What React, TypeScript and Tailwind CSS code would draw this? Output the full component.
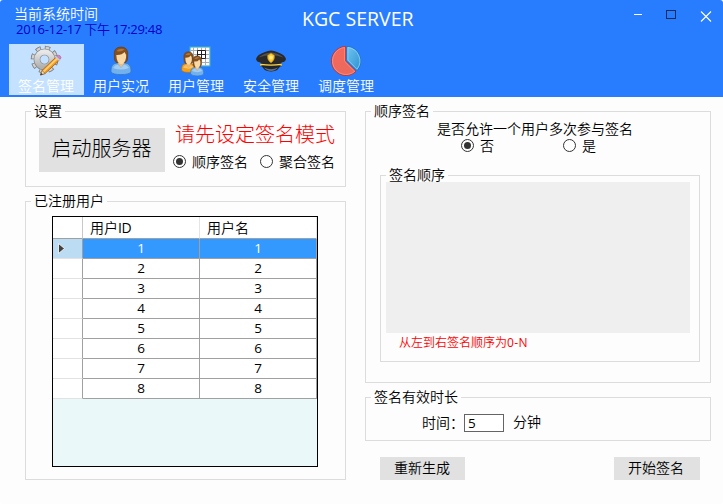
import type { ReactNode } from 'react';

function Gear() {
  return (
    <svg width="32" height="32" viewBox="0 0 32 32">
      <defs>
        <linearGradient id="gear" x1="0" y1="0" x2="0" y2="1">
          <stop offset="0" stopColor="#e8e8e8" />
          <stop offset="1" stopColor="#b0b0b0" />
        </linearGradient>
      </defs>
      <circle cx="14.500" cy="14.500" r="11.500" fill="none" stroke="#777" strokeWidth="4.600" strokeDasharray="5.1 3.932" />
      <circle cx="14.500" cy="14.500" r="11.300" fill="none" stroke="#d2d2d2" strokeWidth="3.400" strokeDasharray="3.7 5.175" strokeDashoffset="-0.700" />
      <circle cx="14.500" cy="14.500" r="7.500" fill="none" stroke="#858585" strokeWidth="6.600" />
      <circle cx="14.500" cy="14.500" r="7.500" fill="none" stroke="url(#gear)" strokeWidth="5.400" />
      <path d="M10.500 30 L12 25.500 L26 12 L29.200 15.200 L15.200 28.500 Z" fill="#f79a1c" stroke="#9b5a12" strokeWidth="0.700" />
      <path d="M12.900 26 L26.700 12.700 L27.900 13.900 L14 27.200 Z" fill="#ffd27a" />
      <path d="M10.500 30 L12 25.500 L15.200 28.500 Z" fill="#f4dcb8" stroke="#7c5a30" strokeWidth="0.600" />
      <path d="M10.300 30.300 L11.200 27.900 L12.800 29.300 Z" fill="#333" />
      <path d="M25.200 12.500 L26.700 11 L30 14.300 L28.500 15.700 Z" fill="#c9cdd4" />
      <path d="M26.500 11.100 Q28 9.400 30 10.700 Q32 12.700 30.200 14.300 Z" fill="#d97fc0" stroke="#a45b92" strokeWidth="0.500" />
    </svg>
  );
}

function Person({ shirt, edge }: { shirt: string; edge: string }) {
  return (
    <>
      <path d="M1 24 Q1 17.500 7 17 L15 17 Q21 17.500 21 24 L21 26 Q19 28.600 11 28.600 Q3 28.600 1 26 Z" fill={shirt} stroke={edge} strokeWidth="0.800" />
      <path d="M3 22 Q5 18.800 8 18.500 L11 22 L14 18.500 Q17 18.800 19 22 Q11 25 3 22 Z" fill="#fff" opacity="0.350" />
      <path d="M7.300 16.500 L11 21.500 L14.700 16.500 Z" fill="#edbd82" />
      <path d="M4.300 10 Q3.300 1 11 1 Q18.700 1 17.700 10 Q18 15 15.500 16.500 L6.500 16.500 Q4 15 4.300 10 Z" fill="#84501f" stroke="#63350c" strokeWidth="0.600" />
      <path d="M6.300 9 Q12 9.300 14.500 6 Q16.500 8 16 12 Q14.800 18 11 18 Q6.700 17.500 6.300 9 Z" fill="#f9d9a5" />
      <path d="M6.500 5 Q10 1.500 14.500 3.500 Q11 6.500 6.500 5 Z" fill="#b98045" opacity="0.800" />
    </>
  );
}

function User() {
  return (
    <svg width="22" height="30" viewBox="0 0 22 30">
      <Person shirt="#72b1ed" edge="#3478be" />
    </svg>
  );
}

function Users() {
  return (
    <svg width="32" height="32" viewBox="0 0 32 32">
      <rect x="10" y="2" width="20" height="19" fill="#fff" stroke="#3db0c5" strokeWidth="1.200" />
      <path d="M10.500 5.500h19M10.500 9.500h19M10.500 13.500h19M10.500 17.500h19M13.500 2.500v18M17.500 2.500v18M21.500 2.500v18M25.500 2.500v18" stroke="#a5aeb5" fill="none" />
      <path d="M17.500 5.500h8v8h-8zM21.500 5.500v8M17.500 9.500h8" stroke="#222" fill="none" />
      <g transform="translate(1 6) scale(.68 .75)">
        <Person shirt="#f3a01c" edge="#b66808" />
      </g>
      <g transform="translate(10 10) scale(.65 .73)">
        <Person shirt="#72b1ed" edge="#3478be" />
      </g>
    </svg>
  );
}

function Cap() {
  return (
    <svg width="32" height="24" viewBox="0 0 32 24">
      <path d="M6 15 Q8 22.500 16 22.500 Q24 22.500 26 15 Z" fill="#20242b" />
      <path d="M9 18.500 Q16 22 23 18.500 Q20 22 16 22 Q12 22 9 18.500 Z" fill="#69707a" />
      <path d="M1 10 Q2 5.500 10 3 Q16 0 22 3 Q30 5.500 31 10 Q30.500 13 26.500 13.500 L26.500 17.500 Q16 15.500 5.500 17.500 L5.500 13.500 Q1.500 13 1 10 Z" fill="#292929" />
      <path d="M3.500 8.500 Q9 4 16 3.500 Q23 4 28.500 8.500 Q22 6 16 6 Q10 6 3.500 8.500 Z" fill="#525252" />
      <path d="M5.800 16.800v-1.500Q16 16.800 26.200 15.300v1.500" stroke="#ffd84a" strokeWidth="1.200" fill="none" />
      <path d="M16 4 L19.600 6.500 Q20 11 16 14 Q12 11 12.400 6.500 Z" fill="#f7c72c" stroke="#a97506" strokeWidth="0.500" />
      <circle cx="16" cy="8.600" r="2" fill="#ffe88a" />
    </svg>
  );
}

function Pie() {
  return (
    <svg width="32" height="32" viewBox="0 0 32 32">
      <defs>
        <linearGradient id="red" x1="0" y1="0" x2="0" y2="1">
          <stop offset="0" stopColor="#f4685c" />
          <stop offset="1" stopColor="#ea6a5d" />
        </linearGradient>
        <linearGradient id="blue" x1="0" y1="0" x2="1" y2="1">
          <stop offset="0" stopColor="#6fc4ee" />
          <stop offset="1" stopColor="#2e91d3" />
        </linearGradient>
      </defs>
      <path d="M15.500 1.500 A14.500 14.500 0 1 0 26 26.400 L15.500 16 Z" fill="url(#red)" stroke="#c0281b" strokeWidth="0.800" />
      <path d="M14.700 2.400 A13.600 13.600 0 1 0 24.800 26.400 L14.700 16.300 Z" fill="none" stroke="#ff9a90" strokeWidth="0.700" />
      <path d="M17 1.500 A14.500 14.500 0 0 1 27 25.500 L17 15.500 Z" fill="url(#blue)" stroke="#1e6fa4" strokeWidth="0.800" />
      <path d="M17.800 2.400 A13.600 13.600 0 0 1 27 24.300 L17.800 15.100 Z" fill="none" stroke="#a5e0fa" strokeWidth="0.700" />
    </svg>
  );
}

const tools = [
  { label: '签名管理', icon: <Gear />, active: true },
  { label: '用户实况', icon: <User />, active: false },
  { label: '用户管理', icon: <Users />, active: false },
  { label: '安全管理', icon: <Cap />, active: false },
  { label: '调度管理', icon: <Pie />, active: false },
];

function Group({ title, className, children }: { title: string; className: string; children: ReactNode }) {
  return (
    <section className={`flex flex-col border border-[#dcdcdc] ${className}`}>
      <h2 className="-mt-[11px] ml-[5px] h-5 self-start bg-[#fdfdfd] px-[3px] leading-[19px]">{title}</h2>
      {children}
    </section>
  );
}

function Radio({ label, checked = false, className = '' }: { label: string; checked?: boolean; className?: string }) {
  return (
    <label className={`flex h-[17px] items-center gap-[6px] leading-[17px] ${className}`}>
      <span className="flex size-[13px] items-center justify-center rounded-full border border-[#333] bg-white">
        {checked && <span className="size-[7px] rounded-full bg-[#333]" />}
      </span>
      {label}
    </label>
  );
}

function UserTable() {
  return (
    <div className="mt-[5px] ml-[26px] h-[251px] w-[266px] border border-black bg-[#eaf8fa]">
      <div className="grid h-[22px] grid-cols-[30px_117px_117px] bg-white leading-[21px]">
        <div className="border-r border-b border-[#a0a0a0] border-r-[#c8c8c8]" />
        <div className="border-r border-b border-[#a0a0a0] border-r-[#e5e5e5] pl-[7px]">
          用户<span className="font-normal tracking-[-0.3px]">ID</span>
        </div>
        <div className="border-r border-b border-[#a0a0a0] border-r-[#e5e5e5] pl-[7px]">用户名</div>
      </div>
      {[1, 2, 3, 4, 5, 6, 7, 8].map((n) => (
        <div
          key={n}
          className={`grid h-5 grid-cols-[30px_117px_117px] text-center text-[13.5px] leading-[19px] font-normal ${n === 1 ? 'bg-[#3399ff] text-white' : 'bg-white'}`}
        >
          <div
            className={`flex items-center border-r border-b border-r-[#a0a0a0] border-b-[#e2e2e2] pl-[5px] ${n === 1 ? 'bg-[#bcdcf4]' : 'bg-white'}`}
          >
            {n === 1 && (
              <svg width="7" height="11" viewBox="0 0 7 11">
                <path d="M0.500 0.500 L6.500 5.500 L0.500 10.500 Z" fill="#404040" stroke="#fff" strokeWidth="0.800" />
              </svg>
            )}
          </div>
          <div className="border-r border-b border-[#a0a0a0]">{n}</div>
          <div className="border-r border-b border-[#a0a0a0]">{n}</div>
        </div>
      ))}
    </div>
  );
}

export default function App() {
  return (
    <div className="h-[504px] w-[723px] overflow-hidden bg-white font-['Open_Sans','Noto_Sans_CJK_SC',sans-serif] text-[14px] font-[350] text-black">
      <div className="flex h-full flex-col rounded-[3px] bg-[#fdfdfd]">
        <header className="h-[97px] rounded-t-[3px] bg-[#287dff] text-white">
          <div className="flex h-11">
            <div className="w-[302px] pt-[5px] pl-[14px]">
              <div className="h-[17px] leading-[17px]">当前系统时间</div>
              <div className="pl-[2px] text-[13px] leading-[15px] font-normal tracking-[-0.27px] text-[#0000c8]">
                2016-12-17 <span className="font-[350]">下午</span> 17:29:48
              </div>
            </div>
            <h1 className="w-[332px] pt-[5px] text-[19.5px] leading-[28px] font-normal whitespace-nowrap">KGC SERVER</h1>
            <div className="flex gap-[24px] pt-[9px]">
              <svg width="8" height="12" viewBox="0 0 8 12">
                <path d="M0 5.500h8" stroke="#fff" />
              </svg>
              <svg width="10" height="12" viewBox="0 0 10 12">
                <rect x="0.500" y="1.500" width="9" height="8" fill="none" stroke="#102c5c" />
              </svg>
              <svg width="12" height="14" viewBox="0 0 12 14">
                <path d="M1 2.500l10 10M11 2.500l-10 10" stroke="#fff" strokeWidth="1.100" />
              </svg>
            </div>
          </div>
          <nav className="flex pl-[9px]">
            {tools.map((t) => (
              <div
                key={t.label}
                className={`flex h-[51px] w-[75px] flex-col items-center pr-[1px] ${t.active ? 'bg-[#c4e1ff]' : ''}`}
              >
                <div className="flex h-[33px] items-center justify-center">{t.icon}</div>
                <div className="h-[17px] leading-[17px]">{t.label}</div>
              </div>
            ))}
          </nav>
        </header>
        <main className="flex pt-[14px] pl-[25px]">
          <div className="w-[321px]">
            <Group title="设置" className="h-[76px]">
              <div className="flex">
                <button className="mt-[7px] ml-[13px] h-11 w-[126px] bg-[#e1e1e1] pr-[1px] pb-[2px] text-[20px] leading-[38px] font-light">启动服务器</button>
                <div className="pl-[8px]">
                  <div className="pl-[2px] text-[20px] leading-[28px] font-light text-[#ff0000]">请先设定签名模式</div>
                  <div className="mt-[4px] flex gap-[12px]">
                    <Radio label="顺序签名" checked />
                    <Radio label="聚合签名" />
                  </div>
                </div>
              </div>
            </Group>
            <Group title="已注册用户" className="mt-[14px] h-[279px]">
              <UserTable />
            </Group>
          </div>
          <div className="ml-[19px] w-[346px]">
            <Group title="顺序签名" className="h-[272px]">
              <div className="h-[16px] pl-[71px] leading-[15px]">是否允许一个用户多次参与签名</div>
              <div className="flex h-[19px] pl-[95px]">
                <Radio label="否" checked className="w-[102px]" />
                <Radio label="是" />
              </div>
              <Group title="签名顺序" className="mt-[19px] ml-[14px] h-[187px] w-[320px]">
                <div className="-mt-[3px] ml-[5px] h-[151px] w-[304px] bg-[#efefef]" />
                <div className="pl-[18px] text-[12px] leading-[19px] text-[#ff0000]">
                  从左到右签名顺序为<span className="font-normal tracking-[0.4px]">0-N</span>
                </div>
              </Group>
            </Group>
            <Group title="签名有效时长" className="mt-[14px] h-[44px]">
              <div className="mt-[7px] flex h-[19px] pl-[56px] leading-[18px]">
                <span className="w-[42px]">时间：</span>
                <div className="h-[18px] w-[40px] border border-[#646464] bg-white pl-[3px] text-[13.5px] leading-[16px] font-normal">5</div>
                <span className="ml-[9px] leading-[16px]">分钟</span>
              </div>
            </Group>
            <div className="mt-4 flex justify-between pr-[11px] pl-[15px]">
              <button className="h-[23px] w-[85px] bg-[#e1e1e1] pr-[1px] pb-[2px] leading-[20px]">重新生成</button>
              <button className="h-[23px] w-[86px] bg-[#e1e1e1] pr-[2px] pb-[2px] leading-[20px]">开始签名</button>
            </div>
          </div>
        </main>
      </div>
    </div>
  );
}
